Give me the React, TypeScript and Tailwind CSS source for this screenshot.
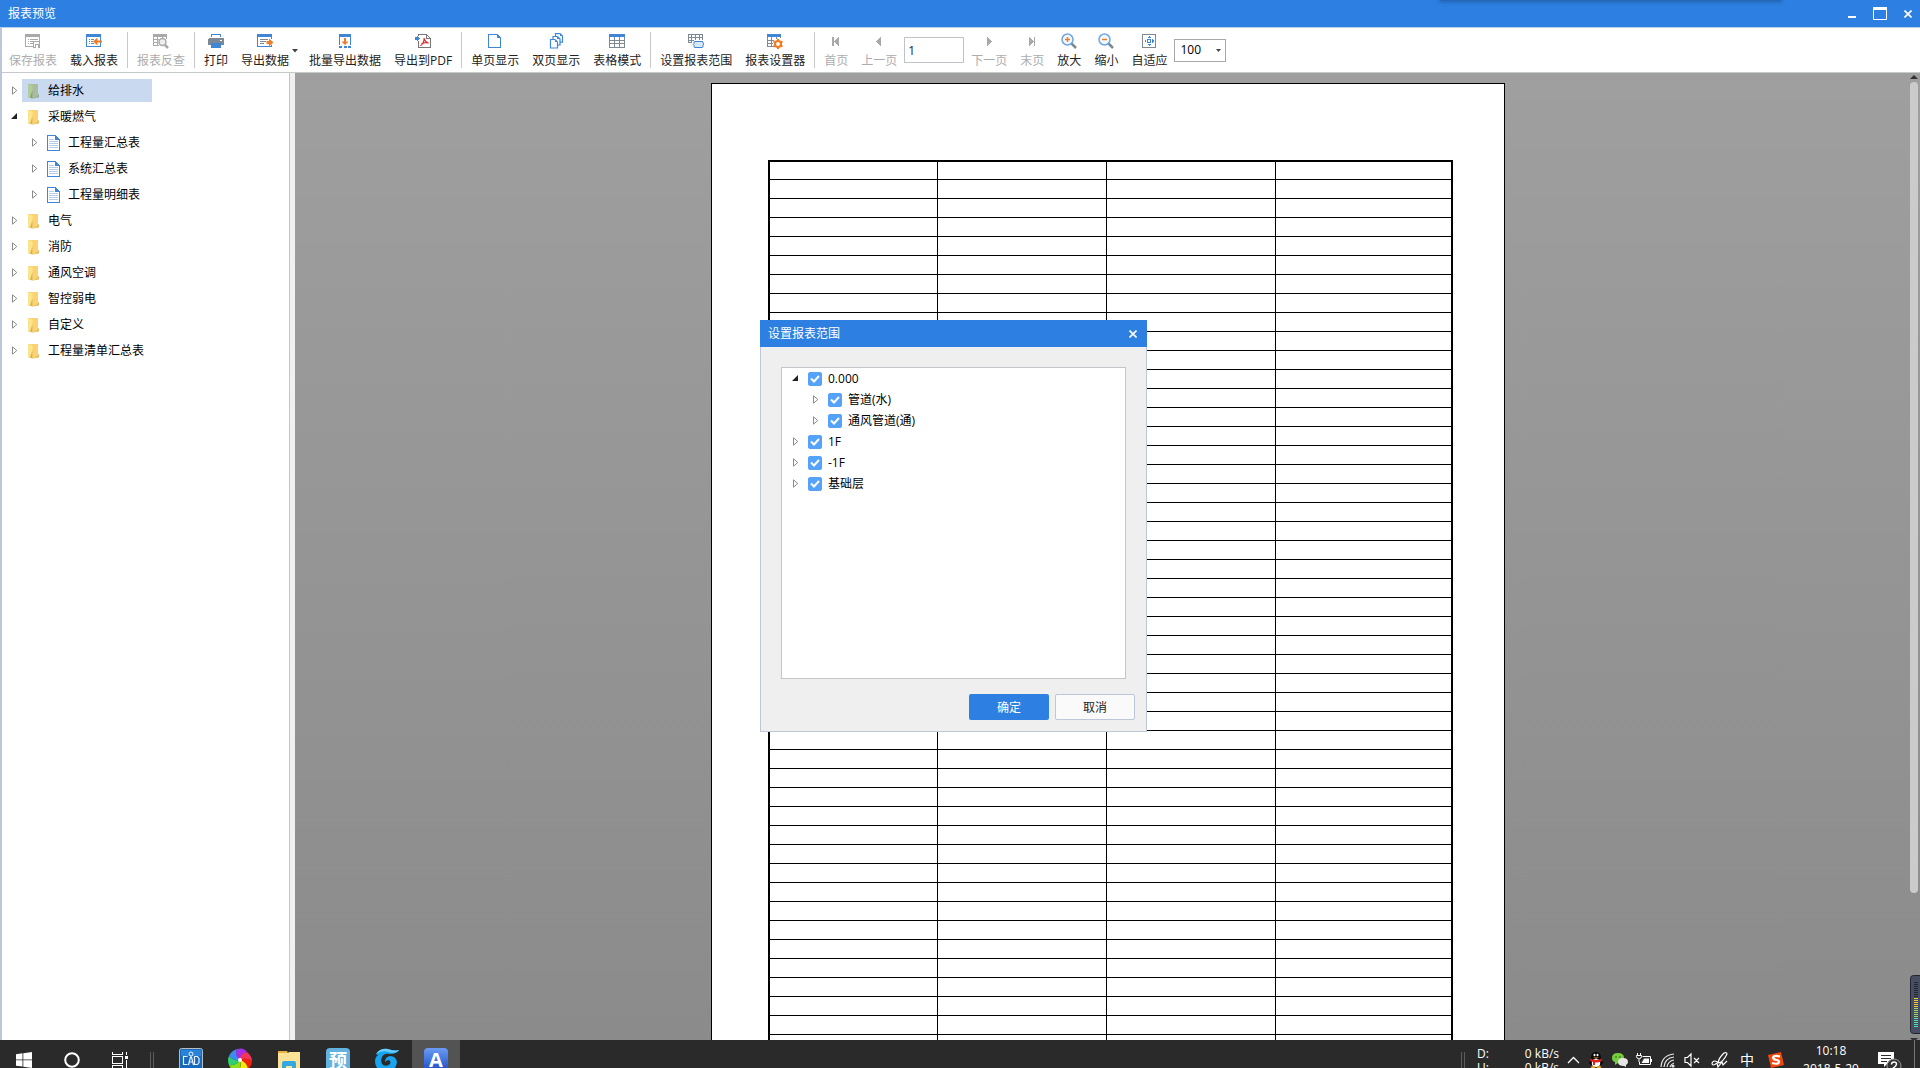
import React, { useState } from "react";

type ToolButtonProps = {
  label: string;
  icon: React.ReactNode;
  disabled?: boolean;
  menu?: boolean;
};

type TreeItem = {
  name: string;
  level: number;
  open?: boolean;
  kind: "folder" | "doc";
};

type RangeItem = {
  id: string;
  name: string;
  level: number;
  open?: boolean;
};

const BLUE = "#3f87d6";
const GRAY = "#a9a9a9";
const SLATE = "#7d8a96";
const ORANGE = "#f07c28";

const reports: TreeItem[] = [
  { name: "给排水", level: 0, kind: "folder" },
  { name: "采暖燃气", level: 0, kind: "folder", open: true },
  { name: "工程量汇总表", level: 1, kind: "doc" },
  { name: "系统汇总表", level: 1, kind: "doc" },
  { name: "工程量明细表", level: 1, kind: "doc" },
  { name: "电气", level: 0, kind: "folder" },
  { name: "消防", level: 0, kind: "folder" },
  { name: "通风空调", level: 0, kind: "folder" },
  { name: "智控弱电", level: 0, kind: "folder" },
  { name: "自定义", level: 0, kind: "folder" },
  { name: "工程量清单汇总表", level: 0, kind: "folder" },
];

const ranges: RangeItem[] = [
  { id: "r0", name: "0.000", level: 0, open: true },
  { id: "r1", name: "管道(水)", level: 1 },
  { id: "r2", name: "通风管道(通)", level: 1 },
  { id: "r3", name: "1F", level: 0 },
  { id: "r4", name: "-1F", level: 0 },
  { id: "r5", name: "基础层", level: 0 },
];

const Icon = ({ children }: { children: React.ReactNode }) => (
  <svg width="16" height="16" viewBox="0 0 16 16" fill="none" shapeRendering="crispEdges">
    {children}
  </svg>
);

const Sheet = ({ color }: { color: string }) => (
  <>
    <path d="M.5 1.5h14v12H.5z" stroke={color} />
    <path d="M0 1h15v3H0z" fill={color} />
  </>
);

const SaveIcon = () => (
  <Icon>
    <path d="M.5 1.5h14v6M.5 1v12.5H9" stroke={GRAY} />
    <path d="M0 1h15v3H0z" fill={GRAY} />
    <path d="M3 6.5h1M5 6.5h8M3 8.5h1M5 8.5h3M3 10.5h1M5 10.5h3" stroke={GRAY} />
    <path d="M8.5 8.5h6v6h-1v-3h-3v3h-2z" stroke={GRAY} />
  </Icon>
);

const LoadIcon = () => (
  <Icon>
    <Sheet color={BLUE} />
    <path d="M3 6.5h1M5 6.5h3M3 8.5h1M5 8.5h2M3 10.5h1M5 10.5h3" stroke={SLATE} />
    <path d="M7 8.5 11.5 4.500v3H16v2h-4.500v3z" fill={ORANGE} shapeRendering="auto" />
  </Icon>
);

const CheckBackIcon = () => (
  <Icon>
    <path d="M.5 1.5h13v4M.5 1v11.500H6M4.500 4v8M9.500 4v2M0 6.500h6M0 9.500h5" stroke={GRAY} />
    <path d="M0 1h14v3H0z" fill={GRAY} />
    <g shapeRendering="auto">
      <circle cx="9.500" cy="9" r="3.500" fill="#eee" stroke={GRAY} strokeWidth="1.500" />
      <path d="m12 12 3 3" stroke={GRAY} strokeWidth="2.500" />
    </g>
  </Icon>
);

const PrintIcon = () => (
  <Icon>
    <path d="M3.500 4V1.500h9V4" stroke={BLUE} strokeWidth="1" />
    <path d="M1 5h14l1 1v6h-3v-2H3v2H0V6z" fill={SLATE} />
    <path d="M3.500 10.500h9v4h-9z" fill={BLUE} stroke={BLUE} />
    <path d="M12 7h2" stroke="#fff" />
  </Icon>
);

const ExportIcon = () => (
  <Icon>
    <path d="M.5 1.500h14v4M.5 1v12.500h14V12" stroke={BLUE} />
    <path d="M0 1h15v3H0z" fill={BLUE} />
    <path d="M3 6.500h8M3 8.500h6M3 10.500h4" stroke={SLATE} />
    <path d="M16.500 9.500 12 5.500v2.500H9.500v3H12v2.500z" fill={ORANGE} shapeRendering="auto" />
  </Icon>
);

const BatchIcon = () => (
  <Icon>
    <path d="M2.500 12v-10.500h11v10.500" stroke={BLUE} />
    <path d="M2 1h12v3H2z" fill={BLUE} />
    <path d="M2 13h3v2H2zM6.500 13h3v2h-3zM11 13h3v2h-3z" fill={BLUE} />
    <path d="M7 5h2v3.500h2.500L8 12 4.500 8.500H7z" fill={ORANGE} shapeRendering="auto" />
  </Icon>
);

const PdfIcon = () => (
  <Icon>
    <path d="M3.500 3V1.500h8l4 4v9h-12V8M11.500 1.500v4h4" stroke="#777" />
    <path d="M0 4h2V2l3 3.500L2 8V6.500H0z" fill={BLUE} />
    <path
      d="M8.800 5c.8 2.200 1.500 4.300 4.700 5.400M9.200 5.500C9 8.500 8 11 5.500 12.800M6.500 11c2.300-1.500 4.500-1.600 7-1"
      stroke="#e02a2a"
      strokeWidth="1.200"
      shapeRendering="auto"
    />
  </Icon>
);

const PageIcon = () => (
  <Icon>
    <path d="M1.500 1.500h9l3 3v10h-12z" stroke={BLUE} />
    <path d="M10 1v4h4z" fill={BLUE} />
  </Icon>
);

const PagesIcon = () => (
  <Icon>
    <g stroke={BLUE} strokeWidth="1.200" fill="#fff" shapeRendering="auto">
      <path d="M7.500.6h4.500l2.500 2.500v6h-7z" />
      <path d="M5 3.500h4.500L12 6v6H5z" />
      <path d="M2.500 6.500H7l2.500 2.500v6h-7z" />
    </g>
    <path d="M12 1v2h3zM9 4v2h3zM7 7v2h3z" fill={BLUE} />
  </Icon>
);

const GridIcon = () => (
  <Icon>
    <path d="M.5 1v13.500h15V1M5.500 4v10M10.500 4v10M1 7.500h14M1 10.500h14" stroke={SLATE} />
    <path d="M0 1h16v3H0z" fill={BLUE} />
  </Icon>
);

const RangeIcon = () => (
  <Icon>
    <path
      d="M.5 8.500v-7h14v5M3.500 1v8M7.500 1v6M11.500 1v6M0 4.500h15M0 7.500h6M0 9.500h4"
      stroke={SLATE}
    />
    <path
      d="M7 8.500h7q1.500 0 1 1.500 1.500 1 0 2 .5 2.500-1 2.500H7q-1.500 0-1-2-1.500-1 0-2-.5-2 1-2z"
      fill="#d7e8fa"
      stroke={BLUE}
      shapeRendering="auto"
    />
  </Icon>
);

const SettingIcon = () => (
  <Icon>
    <path d="M.5 1v12.500H7M13.500 1v4M4.500 4v9M9.500 4v2M1 7.500h6M1 10.500h5" stroke={SLATE} />
    <path d="M0 1h14v3H0z" fill={BLUE} />
    <g shapeRendering="auto">
      <circle cx="11" cy="11" r="3" stroke={ORANGE} strokeWidth="2.200" fill="#fff" />
      <path
        d="M11 5.800v2M11 14.200v2M6.500 8.400l1.800 1M13.700 12.600l1.800 1M6.500 13.600l1.800-1M13.700 9.400l1.800-1"
        stroke={ORANGE}
        strokeWidth="2"
      />
    </g>
  </Icon>
);

const FirstIcon = () => (
  <Icon>
    <path d="M5 4v9" stroke={GRAY} strokeWidth="2" />
    <path d="M11 4v9L6 8.500z" fill={GRAY} />
  </Icon>
);
const PrevIcon = () => (
  <Icon>
    <path d="M10 4v9L5 8.500z" fill={GRAY} />
  </Icon>
);
const NextIcon = () => (
  <Icon>
    <path d="M6 4v9l5-4.500z" fill={GRAY} />
  </Icon>
);
const LastIcon = () => (
  <Icon>
    <path d="M10.500 4v9" stroke={GRAY} strokeWidth="1" />
    <path d="M5 4v9l5-4.500z" fill={GRAY} />
  </Icon>
);

const ZoomIcon = ({ plus }: { plus?: boolean }) => (
  <svg width="16" height="16" viewBox="0 0 16 16" fill="none">
    <path d="m10.500 10.500 4.500 4.500" stroke={SLATE} strokeWidth="2.500" />
    <circle cx="6.500" cy="6.500" r="5.500" fill="#f4f9ff" stroke="#6ea6e2" strokeWidth="1.500" />
    <path d="M4 6.500h5" stroke={ORANGE} strokeWidth="1.500" />
    {plus && <path d="M6.500 4v5" stroke={ORANGE} strokeWidth="1.500" />}
  </svg>
);

const FitIcon = () => (
  <Icon>
    <path d="M1.500 1.500h13v13h-13z" stroke={SLATE} />
    <path d="M6.500 6.500h3v3h-3z" stroke={BLUE} />
    <path d="M8 3 6 5h4zM8 13l-2-2h4zM3 8l2-2v4zM13 8l-2-2v4z" fill={BLUE} />
  </Icon>
);

const ToolButton = ({ label, icon, disabled, menu }: ToolButtonProps) => (
  <button
    disabled={disabled}
    className="h-10 px-1.5 pt-0.5 flex items-center rounded-sm text-[#222] hover:bg-[#e8f1fc] disabled:text-[#adadad] whitespace-nowrap"
  >
    <span className="flex flex-col items-center gap-1">
      {icon}
      <span className="leading-4">{label}</span>
    </span>
    {menu && (
      <svg width="9" height="4" viewBox="0 0 9 4" className="-mr-0.5">
        <path d="M3 0h6L6 3.500z" fill="#444" />
      </svg>
    )}
  </button>
);

const Divider = () => <div className="w-px h-9 mx-0.5 bg-[#c8c8c8]" />;

const Arrow = ({ open }: { open?: boolean }) => (
  <svg width="6" height="9" viewBox="0 0 6 9" className="shrink-0 overflow-visible">
    {open ? (
      <path d="M5 1v6H-1z" fill="#222" />
    ) : (
      <path d="M.5.8v7.400L4.800 4.500z" fill="#fff" stroke="#8c8c8c" />
    )}
  </svg>
);

const FolderIcon = ({ selected }: { selected?: boolean }) => (
  <svg width="13" height="16" viewBox="0 0 13 16" className="shrink-0">
    <path d="M1 1h10v10l1 .5v3L6 15.500l-5-1z" fill={selected ? "#a9bd9e" : "#fad272"} />
    <path d="m1 1 4.500 1.500V15.500L1 14z" fill={selected ? "#b4cb9c" : "#fbe58c"} />
    <path d="M5.500 7v8.500l-2.500-1z" fill={selected ? "#8a9c7c" : "#d9b058"} />
    <path d="m6 15.500 6-1.500v-3l-2 2.500z" fill={selected ? "#97a9a2" : "#dfb765"} />
  </svg>
);

const DocIcon = () => (
  <svg width="13" height="16" viewBox="0 0 13 16" fill="none" className="shrink-0" shapeRendering="crispEdges">
    <path d="M.5.5h8l4 4v11H.5z" fill="#fff" stroke={BLUE} />
    <path d="M8 0v5h5z" fill={BLUE} />
    <path d="M2 4.500h5M2 6.500h9M2 8.500h9M2 10.500h9M2 12.500h9" stroke="#b5cdea" />
  </svg>
);

function ReportTree() {
  const [selected, setSelected] = useState("给排水");

  return (
    <ul className="flex flex-col gap-[3px] pt-1.5 pl-2.5">
      {reports.map((item) => (
        <li
          key={item.name}
          className={item.level ? "h-[23px] flex items-center gap-1 pl-5" : "h-[23px] flex items-center gap-1"}
        >
          <Arrow open={item.open} />
          <button
            onClick={() => setSelected(item.name)}
            className={
              item.name == selected
                ? "h-full w-[130px] flex items-center gap-2 pl-[5px] bg-[#c9d9f0]"
                : "h-full flex items-center gap-2 pl-[5px]"
            }
          >
            {item.kind == "folder" ? <FolderIcon selected={item.name == selected} /> : <DocIcon />}
            <span>{item.name}</span>
          </button>
        </li>
      ))}
    </ul>
  );
}

function RangeDialog() {
  return (
    <div
      role="dialog"
      aria-label="设置报表范围"
      className="absolute left-[760px] top-[320px] w-[387px] flex flex-col bg-[#efefef]"
    >
      <div className="h-[27px] pl-2 pr-2.5 flex items-center justify-between bg-[#2d80e2] text-white">
        <span>设置报表范围</span>
        <button aria-label="关闭">
          <svg width="8" height="8" viewBox="0 0 8 8">
            <path d="m.5.5 7 7m0-7-7 7" stroke="#fff" strokeWidth="1.600" />
          </svg>
        </button>
      </div>
      <div className="border border-t-0 border-[#bcc8da] pt-5 px-5 pb-[11px]">
        <ul className="h-[312px] bg-white border border-[#c3c5c8] pl-[11px]">
          {ranges.map((item) => (
            <li
              key={item.id}
              className={item.level ? "h-[21px] flex items-center pl-5" : "h-[21px] flex items-center"}
            >
              <Arrow open={item.open} />
              <label className="flex items-center gap-1.5 pl-[9px]">
                <span className="grid place-items-center">
                  <input
                    type="checkbox"
                    defaultChecked
                    className="col-start-1 row-start-1 appearance-none size-3.5 rounded-xs border border-[#55a2fb] checked:bg-[#55a2fb]"
                  />
                  <svg
                    width="10"
                    height="8"
                    viewBox="0 0 10 8"
                    fill="none"
                    className="col-start-1 row-start-1 pointer-events-none"
                  >
                    <path d="m1 3.500 3 3L9 1" stroke="#fff" strokeWidth="2" />
                  </svg>
                </span>
                {item.name}
              </label>
            </li>
          ))}
        </ul>
        <div className="flex justify-end gap-1.5 pt-[15px] -mr-[9px]">
          <button className="w-20 h-[26px] pt-0.5 rounded-xs bg-[#2d80e2] text-white">确定</button>
          <button className="w-20 h-[26px] pt-0.5 rounded-xs bg-[#fafafa] border border-[#bcc8da] text-[#222]">
            取消
          </button>
        </div>
      </div>
    </div>
  );
}

const TaskIcon = ({ label, active, children }: { label: string; active?: boolean; children: React.ReactNode }) => (
  <button
    aria-label={label}
    className={
      active
        ? "w-12 h-10 flex items-center justify-center bg-[#535353]"
        : "w-12 h-10 flex items-center justify-center"
    }
  >
    {children}
  </button>
);

const Grip = () => <div className="w-1 h-4 border-x border-[#5c5c5c]" />;

function Taskbar() {
  return (
    <div className="h-7 shrink-0 overflow-hidden bg-[#2a2a2a] text-white">
      <div className="h-10 flex items-center justify-between">
        <div className="flex items-center">
          <TaskIcon label="开始">
            <svg width="16" height="16" viewBox="0 0 16 16" fill="#fff">
              <path d="m0 2.200 6.500-.9v6.200H0zM7.300 1.200 16 0v7.500H7.300zM0 8.300h6.500v6.300L0 13.700zM7.300 8.300H16V16l-8.700-1.200z" />
            </svg>
          </TaskIcon>
          <TaskIcon label="搜索">
            <svg width="16" height="16" viewBox="0 0 16 16" fill="none">
              <circle cx="8" cy="8" r="6.800" stroke="#fff" strokeWidth="2" />
            </svg>
          </TaskIcon>
          <TaskIcon label="任务视图">
            <svg width="16" height="16" viewBox="0 0 16 16" fill="none" stroke="#fff" shapeRendering="crispEdges">
              <path d="M.5 0v2.500h10V0M.5 4.500h10v7H.5zM.5 16v-2.500h10V16M14.500 0v3M14.500 8v8" />
              <path d="M13 4h3v3h-3z" fill="#fff" stroke="none" />
            </svg>
          </TaskIcon>
          <div className="pl-1.5 pr-[13px]">
            <Grip />
          </div>
          <div className="flex items-center gap-px">
            <TaskIcon label="CAD">
              <svg width="24" height="24" viewBox="0 0 24 24" fill="none">
                <rect x=".5" y=".5" width="23" height="23" rx="2" fill="#1669bd" stroke="#b4bcc6" />
                <path d="M2 2h20v6H2z" fill="#2a83d6" />
                <path
                  d="M8.500 8.500h-4v8h4M15.500 8.500h3l1.500 2v4l-1.500 2h-3zM9.500 17l2-8h1l2 8M10.500 14h3"
                  stroke="#e8f2ff"
                  strokeWidth="1.200"
                />
                <circle cx="12" cy="6" r="2" stroke="#e8f2ff" />
              </svg>
            </TaskIcon>
            <TaskIcon label="浏览器">
              <svg width="24" height="24" viewBox="0 0 24 24">
                <path d="M12 12Q6 8 9 1q7-2 10 3-5 1-7 8z" fill="#a62fe6" />
                <path d="M12 12q0-7 7-8 5 4 5 9-6-4-12-1z" fill="#f0345c" />
                <path d="M12 12q7-3 12 1 0 5-4 8-1-7-8-9z" fill="#f5200a" />
                <path d="M12 12q7 2 8 9-5 4-10 2 4-4 2-11z" fill="#f6e60a" />
                <path d="M12 12q2 7-3 12-6-2-8-7 7 1 11-5z" fill="#8be01c" />
                <path d="M12 12q-4 6-11 5-2-5 0-9 4 5 11 4z" fill="#2fcf74" />
                <path d="M12 12Q5 13 1 8q2-5 8-7-3 6 3 11z" fill="#3b8cf0" />
                <circle cx="12" cy="12" r="2" fill="#fff" />
              </svg>
            </TaskIcon>
            <TaskIcon label="文件资源管理器">
              <svg width="22" height="20" viewBox="0 0 22 20">
                <path d="M0 1h9l1 2H0z" fill="#e8b540" />
                <path d="M0 3h10l1-1h11v17H0z" fill="#fde395" />
                <path d="M4 20v-7q0-2 2-2h10q2 0 2 2v7h-4v-4H8v4z" fill="#32a9e0" />
              </svg>
            </TaskIcon>
            <TaskIcon label="预算">
              <span className="size-6 rounded-sm bg-[#62b3df] flex items-center justify-center text-lg leading-6 font-bold">
                预
              </span>
            </TaskIcon>
            <TaskIcon label="广联达">
              <svg width="24" height="24" viewBox="0 0 24 24" fill="none">
                <path
                  d="M24 2Q22 6 15 6 9 5 7 9q-2 5 1 8 4 2 7-1 1-3-1-4-2 0-4 2 0-5 5-6 6 0 7 6-1 9-10 10Q1 24 0 14 0 9 3 7l-2-1Q5 0 13 1q6 2 11 1z"
                  fill="#18a4ee"
                />
                <path d="M24 2Q19 4 13 1 5 0 1 6q6-4 12-2 8 2 11-2z" fill="#6bd0ff" />
              </svg>
            </TaskIcon>
            <TaskIcon label="安装算量" active>
              <span className="size-6 rounded-sm bg-linear-to-b from-[#6a9cf6] to-[#1b48c4] flex items-center justify-center text-xl leading-6 font-bold">
                A
              </span>
            </TaskIcon>
          </div>
        </div>

        <div className="flex items-center">
          <Grip />
          <div className="w-[82px] ml-3 mt-0.5 leading-3.5">
            <div className="flex justify-between">
              <span>D:</span>
              <span>0 kB/s</span>
            </div>
            <div className="flex justify-between">
              <span>U:</span>
              <span>0 kB/s</span>
            </div>
          </div>
          <div className="flex items-center gap-2 pl-2">
            <svg width="13" height="8" viewBox="0 0 13 8" fill="none">
              <path d="m1 7 5.500-5.500L12 7" stroke="#fff" strokeWidth="1.300" />
            </svg>
            <svg width="16" height="16" viewBox="0 0 16 16">
              <path d="M3 6q0-6 5-6t5 6l2 5-2 2H3l-2-2z" fill="#080808" />
              <ellipse cx="8" cy="11" rx="4.200" ry="4" fill="#fff" />
              <path d="M2.500 6.500q5.500 3 11 0l.5 2.500q-4 2-7 1.500V13H5v-3L2 9z" fill="#e01f1f" />
              <ellipse cx="6.500" cy="3" rx="1" ry="1.300" fill="#fff" />
              <ellipse cx="9.500" cy="3" rx="1" ry="1.300" fill="#fff" />
              <path d="M5 5.500h6l-3 1.300zM2.500 15q3-2 5 0l-1 1h-3zM8.500 15q3-2 5 0l-1 1h-3z" fill="#f6a61c" />
            </svg>
            <svg width="16" height="16" viewBox="0 0 16 16">
              <path d="M6 1q6 0 6 5t-6 5l-3 2V10Q0 9 0 6q0-5 6-5z" fill="#74cf3c" />
              <path d="M11 6q5 0 5 4 0 2-2 3v2l-2-1q-6 0-6-4 0-4 5-4z" fill="#e6e6e6" />
              <circle cx="4" cy="5" r=".8" fill="#2b5a12" />
              <circle cx="8" cy="5" r=".8" fill="#2b5a12" />
            </svg>
            <svg width="16" height="16" viewBox="0 0 16 16" fill="none" stroke="#fff">
              <path d="M6.500 4.500h8v8h-11V10M15.500 7v3" />
              <path d="M8 6.500h5V11H5.500z" fill="#fff" stroke="none" />
              <path d="M1.500 1v2M4.500 1v2M.5 3.500h5v1q0 2-2 2h-1q-2 0-2-2zM3 7v3" />
            </svg>
            <svg width="16" height="16" viewBox="0 0 16 16" fill="none" stroke="#e6e6e6" strokeWidth="1.200">
              <path d="M1 15Q2 3 14 2M4 15Q5 6 14 5M7 15q1-6 7-7M10 15q1-3 4-4" />
              <circle cx="13" cy="14" r="1" fill="#fff" />
            </svg>
            <svg width="16" height="16" viewBox="0 0 16 16" fill="none" stroke="#fff" strokeWidth="1.200">
              <path d="M1 5.500h2.500L7 2v12l-3.500-3.500H1zM10 6l5 5M15 6l-5 5" />
            </svg>
            <svg width="24" height="16" viewBox="0 0 24 16" fill="none" stroke="#fff" strokeWidth="1.200">
              <path d="M11 11q-2-3 5-10 3-1 3 1-4 8-8 9zM11 11q-5-4-7 0 0 4 5 0l1 4 4-5 1 3 4-4" />
            </svg>
            <button aria-label="输入法" className="w-[14px] text-sm leading-4">
              中
            </button>
            <span className="pl-1.5">
              <svg width="16" height="16" viewBox="0 0 16 16" fill="none">
                <path d="m0 3 13-3 3 13-13 3z" fill="#f0480c" />
                <path
                  d="M12 4.500Q6 3 5 5.500 5 7.500 9 8q3 1 1.500 3-2 1.500-6.500 0"
                  stroke="#fff"
                  strokeWidth="2.200"
                />
              </svg>
            </span>
          </div>
          <div className="w-[62px] ml-4 text-center leading-[18px] whitespace-nowrap">
            <div>10:18</div>
            <div>2018-5-20</div>
          </div>
          <button aria-label="通知" className="ml-4 mr-3">
            <svg width="24" height="20" viewBox="0 0 24 20" fill="none">
              <path d="M0 2h16v12H9l-3 3v-3H0z" fill="#fff" />
              <path d="M3 5.500h10M3 8.500h10M3 11.500h6" stroke="#2a2a2a" />
              <circle cx="16" cy="16" r="7" fill="#333" stroke="#999" />
              <path d="M13.500 14.500q0-2.500 2.500-2.500t2.500 2-4.500 5h5" stroke="#fff" strokeWidth="1.400" />
            </svg>
          </button>
          <div className="w-1.5 h-10 border-l border-[#777]" />
        </div>
      </div>
    </div>
  );
}

// level meter docked on the right edge of the desktop
const LevelMeter = () => (
  <svg width="10" height="65" viewBox="0 0 10 65" className="absolute right-0 bottom-0">
    <rect x=".5" y=".5" width="14" height="58" rx="3" fill="#474e63" stroke="#23262f" />
    {Array.from({ length: 23 }, (_, i) => (
      <path
        key={i}
        d={`M4 ${7.5 + i * 2}h4`}
        stroke={i < 8 ? "#23262f" : i < 13 ? "#e8c93a" : i < 18 ? "#9bd860" : "#4fe0b4"}
      />
    ))}
    <path d="M0 63h8l-2 2H2z" fill="#333" />
  </svg>
);

export default function App() {
  const [page, setPage] = useState("1");

  return (
    <div className="relative h-screen overflow-hidden flex flex-col bg-white text-xs text-black font-['Open_Sans','Noto_Sans_CJK_SC',sans-serif]">
      <header className="h-7 shrink-0 pl-2 pr-2 flex items-center justify-between bg-[#2d80e2] border-b border-[#b9cfe9] text-white">
        <h1>报表预览</h1>
        <div className="flex items-center gap-[17px]">
          <button aria-label="最小化">
            <svg width="8" height="8" viewBox="0 0 8 8">
              <path d="M0 6h8v2H0z" fill="#fff" />
            </svg>
          </button>
          <button aria-label="最大化">
            <svg width="14" height="13" viewBox="0 0 14 13" fill="none">
              <path d="M.5.5h13v12H.5z" stroke="#fff" />
              <path d="M0 0h14v3H0z" fill="#fff" />
            </svg>
          </button>
          <button aria-label="关闭">
            <svg width="8" height="8" viewBox="0 0 8 8">
              <path d="m.5.5 7 7m0-7-7 7" stroke="#fff" strokeWidth="1.600" />
            </svg>
          </button>
        </div>
      </header>
      <div className="absolute top-0 right-[139px] w-[341px] h-px bg-[#2367b8] shadow-[0_0_4px_1px_#1d59a3]" />

      <div className="flex-1 min-h-0 flex flex-col border-l-2 border-[#bcc8da]">
        <div className="h-[45px] shrink-0 pl-px flex items-center gap-px border-b border-[#c6c9ce]">
          <ToolButton label="保存报表" icon={<SaveIcon />} disabled />
          <ToolButton label="载入报表" icon={<LoadIcon />} />
          <Divider />
          <ToolButton label="报表反查" icon={<CheckBackIcon />} disabled />
          <Divider />
          <ToolButton label="打印" icon={<PrintIcon />} />
          <ToolButton label="导出数据" icon={<ExportIcon />} menu />
          <ToolButton label="批量导出数据" icon={<BatchIcon />} />
          <ToolButton label="导出到PDF" icon={<PdfIcon />} />
          <Divider />
          <ToolButton label="单页显示" icon={<PageIcon />} />
          <ToolButton label="双页显示" icon={<PagesIcon />} />
          <ToolButton label="表格模式" icon={<GridIcon />} />
          <Divider />
          <ToolButton label="设置报表范围" icon={<RangeIcon />} />
          <ToolButton label="报表设置器" icon={<SettingIcon />} />
          <Divider />
          <ToolButton label="首页" icon={<FirstIcon />} disabled />
          <ToolButton label="上一页" icon={<PrevIcon />} disabled />
          <input
            aria-label="页码"
            value={page}
            onChange={(e) => setPage(e.target.value)}
            className="w-[60px] h-[26px] px-[3px] border border-[#bfc3ca] text-[#222]"
          />
          <ToolButton label="下一页" icon={<NextIcon />} disabled />
          <ToolButton label="末页" icon={<LastIcon />} disabled />
          <ToolButton label="放大" icon={<ZoomIcon plus />} />
          <ToolButton label="缩小" icon={<ZoomIcon />} />
          <ToolButton label="自适应" icon={<FitIcon />} />
          <div className="grid items-center">
            <select
              aria-label="缩放比例"
              className="col-start-1 row-start-1 appearance-none w-[52px] h-[23px] pl-[5px] border border-[#a9a9a9] bg-white"
            >
              <option>100</option>
            </select>
            <svg
              width="5"
              height="3"
              viewBox="0 0 5 3"
              className="col-start-1 row-start-1 justify-self-end mr-[5px] pointer-events-none"
            >
              <path d="M0 0h5L2.500 3z" fill="#444" />
            </svg>
          </div>
        </div>

        <div className="flex-1 min-h-0 flex">
          <aside className="w-[288px] shrink-0 border-r border-[#c3c5c8]">
            <ReportTree />
          </aside>
          <div className="w-[5px] shrink-0 bg-[#f0f0f0]" />
          <main className="relative flex-1 min-w-0 overflow-hidden pt-2.5 pl-px flex justify-center items-start bg-linear-to-b from-[#9f9f9f] to-[#8b8b8b]">
            <div className="w-[794px] h-[1123px] shrink-0 bg-white border border-black pt-[76px] pl-14">
              <table className="table-fixed w-[685px] border-separate border-spacing-0 border-2 border-black">
                <colgroup>
                  <col className="w-[168px]" />
                  <col className="w-[169px]" />
                  <col className="w-[169px]" />
                  <col />
                </colgroup>
                <tbody>
                  {Array.from({ length: 50 }, (_, row) => (
                    <tr key={row} className="h-[19px] first:h-[18px]">
                      <td className="p-0 border-b border-r border-black" />
                      <td className="p-0 border-b border-r border-black" />
                      <td className="p-0 border-b border-r border-black" />
                      <td className="p-0 border-b border-black" />
                    </tr>
                  ))}
                </tbody>
              </table>
            </div>
            <div className="absolute right-0.5 inset-y-0 pt-0.5 flex flex-col items-center gap-[3px]">
              <svg width="8" height="4" viewBox="0 0 8 4">
                <path d="M4 0 8 4H0z" fill="#333" />
              </svg>
              <div className="w-2 h-[84%] rounded-full bg-[#cbcbcb]" />
            </div>
            <LevelMeter />
          </main>
        </div>
      </div>

      <Taskbar />
      <RangeDialog />
    </div>
  );
}
